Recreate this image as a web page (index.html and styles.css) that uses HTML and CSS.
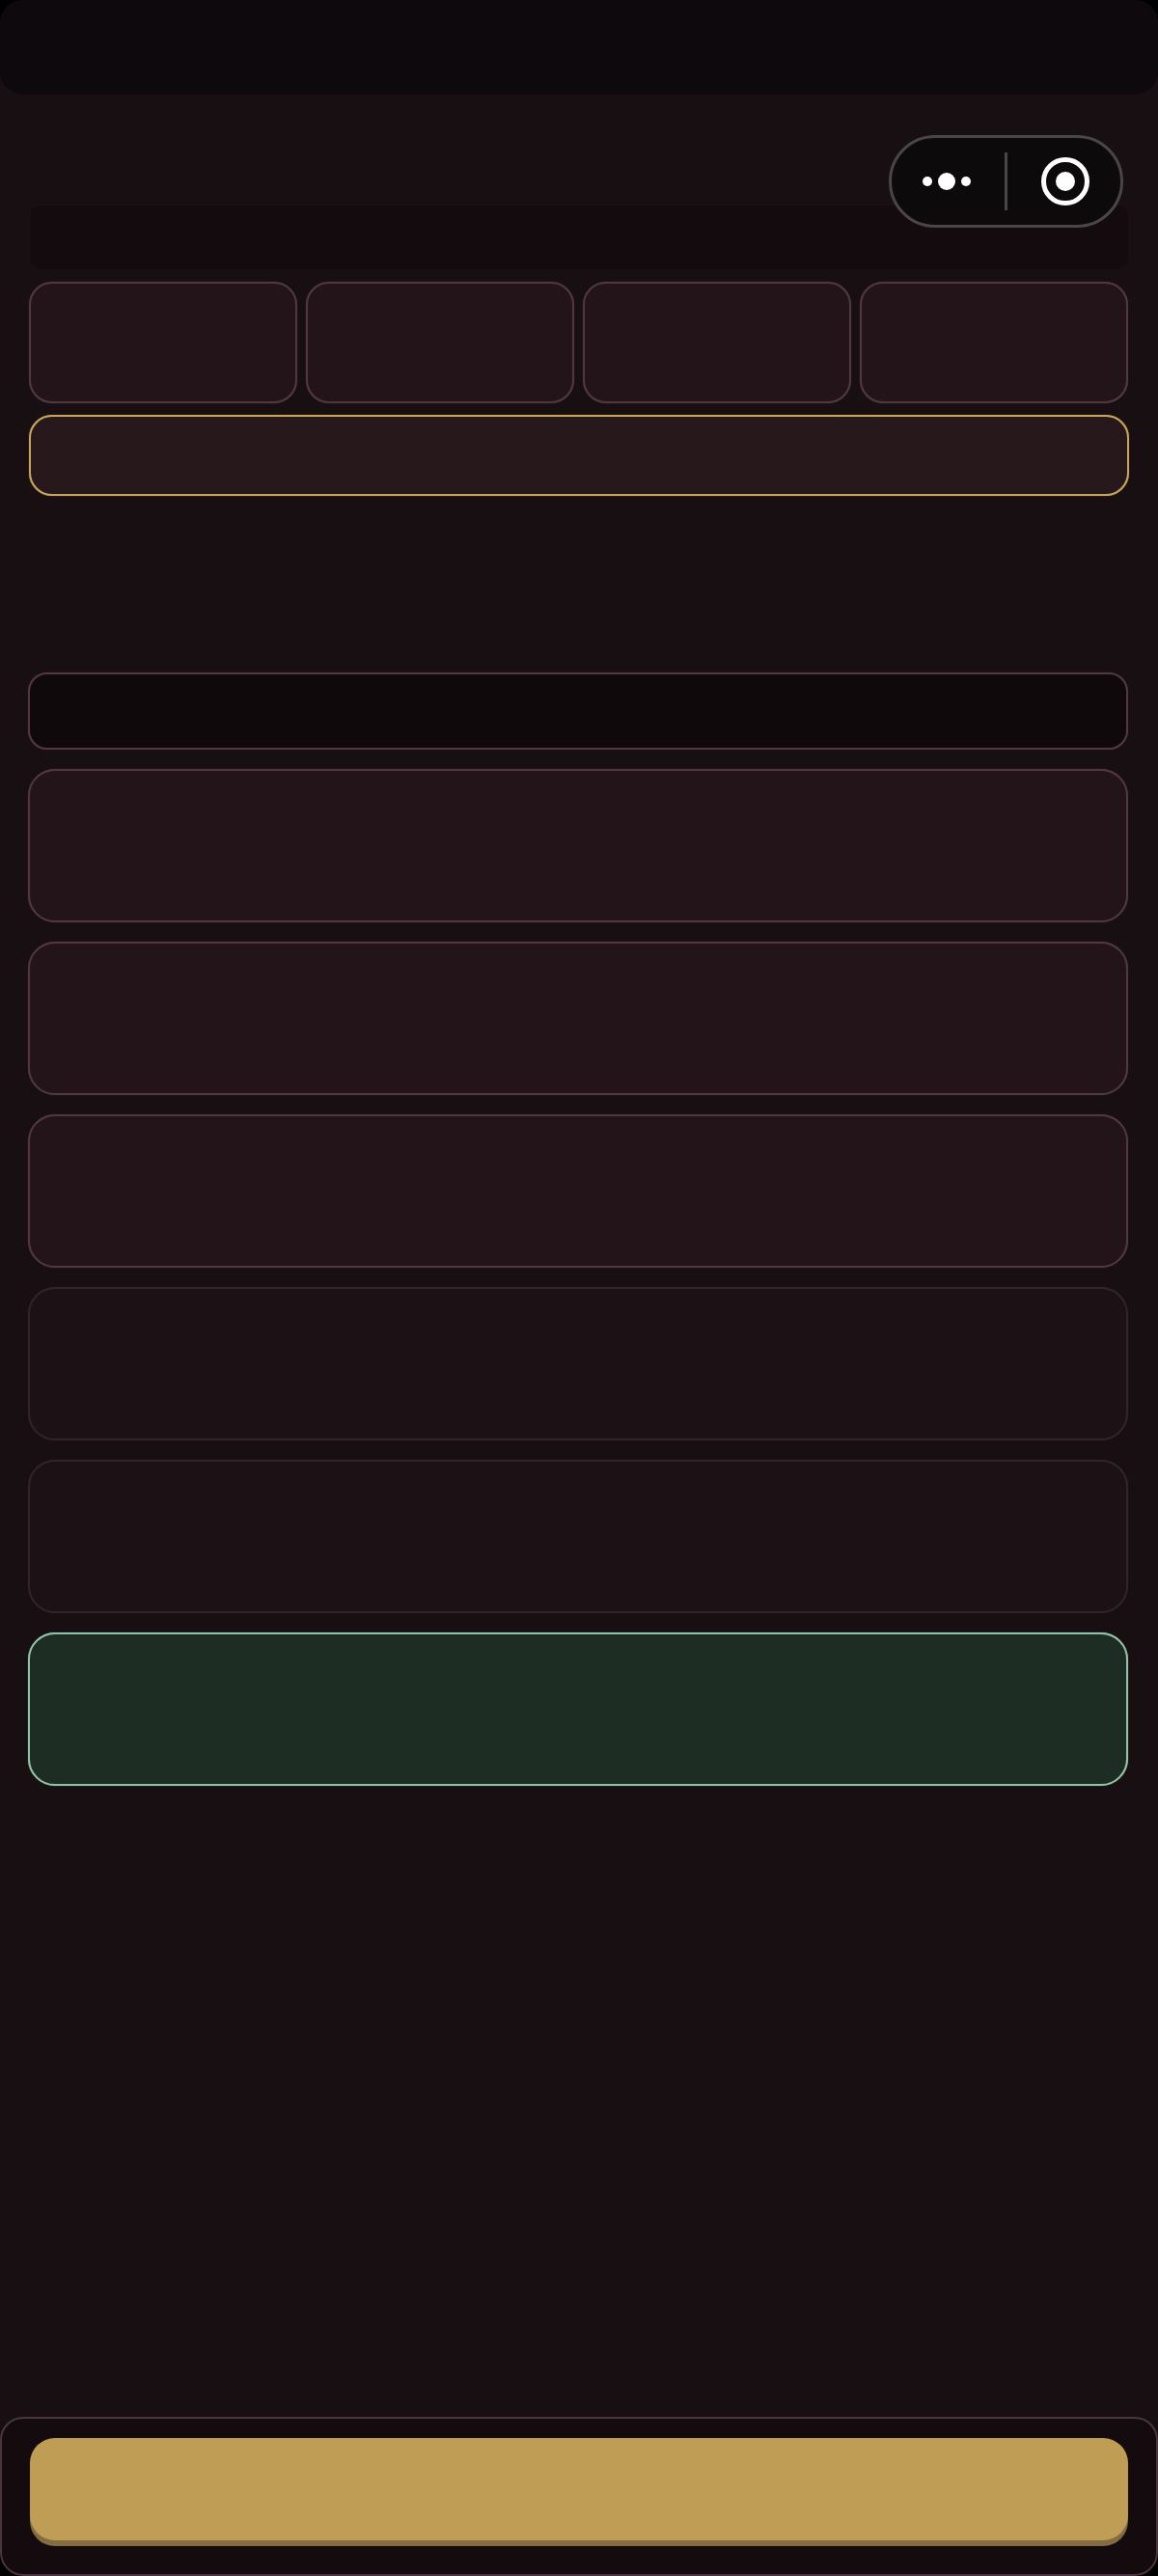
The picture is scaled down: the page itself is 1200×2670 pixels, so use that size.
FILE: index.html
```html
<!DOCTYPE html>
<html lang="en">
<head>
<meta charset="utf-8">
<title>Screen</title>
<link rel="stylesheet" href="styles.css">
</head>
<body>
<div class="screen">
  <header class="status-bar"></header>
  <div class="capsule">
    <div class="capsule-menu">
      <svg width="50" height="18" viewBox="0 0 50 18" aria-hidden="true">
        <circle cx="5" cy="9" r="5" fill="#fff"/>
        <circle cx="25" cy="9" r="9" fill="#fff"/>
        <circle cx="45" cy="9" r="5" fill="#fff"/>
      </svg>
    </div>
    <span class="capsule-divider"></span>
    <div class="capsule-close">
      <svg width="50" height="50" viewBox="0 0 50 50" aria-hidden="true">
        <circle cx="25" cy="25" r="22.5" fill="none" stroke="#fff" stroke-width="5"/>
        <circle cx="25" cy="25" r="10" fill="#fff"/>
      </svg>
    </div>
  </div>
  <main class="content">
    <div class="band"></div>
    <div class="stat-row">
      <div class="stat"></div>
      <div class="stat"></div>
      <div class="stat"></div>
      <div class="stat"></div>
    </div>
    <div class="highlight"></div>
    <div class="search"></div>
    <div class="list">
      <div class="item"></div>
      <div class="item"></div>
      <div class="item"></div>
      <div class="item item-muted"></div>
      <div class="item item-muted"></div>
      <div class="item item-success"></div>
    </div>
  </main>
  <footer class="action-bar">
    <div class="action-button"></div>
  </footer>
</div>
</body>
</html>
```
FILE: styles.css
```css
html, body {
  margin: 0;
  padding: 0;
  background: #000;
}

.screen {
  position: relative;
  width: 1200px;
  height: 2670px;
  display: flex;
  flex-direction: column;
  background: #180f13;
  border-radius: 24px;
  overflow: hidden;
}

.status-bar {
  flex: none;
  height: 98px;
  background: #0e090c;
  border-radius: 24px;
}

.capsule {
  position: absolute;
  top: 140px;
  left: 921px;
  width: 243px;
  height: 96px;
  box-sizing: border-box;
  display: flex;
  align-items: center;
  background: #0d0a0c;
  border: 3px solid #4a4648;
  border-radius: 48px;
  z-index: 2;
}

.capsule-menu {
  flex: none;
  width: 117px;
  box-sizing: border-box;
  padding-right: 3px;
  display: flex;
  justify-content: center;
}

.capsule-divider {
  flex: none;
  width: 3px;
  height: 60px;
  background: #4a4648;
}

.capsule-close {
  flex: 1;
  box-sizing: border-box;
  padding-left: 3px;
  display: flex;
  justify-content: center;
}

.content {
  flex: 1;
  display: flex;
  flex-direction: column;
  padding: 115px 31px 0 29px;
}

.band {
  height: 66px;
  margin: 0 0 13px 2px;
  background: #130b0e;
  border-radius: 12px;
}

.stat-row {
  display: grid;
  grid-template-columns: repeat(4, 1fr);
  gap: 9px;
  margin: 0 0 12px 1px;
}

.stat {
  height: 126px;
  box-sizing: border-box;
  background: #23141a;
  border: 2px solid #513840;
  box-shadow: 0 0 1px #4a3339;
  border-radius: 24px;
}

.highlight {
  height: 84px;
  box-sizing: border-box;
  background: #27181b;
  border: 2px solid #c9a55b;
  box-shadow: 0 0 1px #a8894c;
  border-radius: 24px;
  margin: 0 -1px 183px 1px;
}

.search {
  height: 80px;
  box-sizing: border-box;
  background: #0f090c;
  border: 2px solid #513840;
  box-shadow: 0 0 1px #4a3339;
  border-radius: 20px;
  margin-bottom: 20px;
}

.list {
  display: flex;
  flex-direction: column;
  gap: 20px;
}

.item {
  height: 159px;
  box-sizing: border-box;
  background: #23141a;
  border: 2px solid #513840;
  box-shadow: 0 0 1px #4a3339;
  border-radius: 28px;
}

.item-muted {
  background: #1c1216;
  border-color: #33242a;
  box-shadow: 0 0 1px #2a1d22;
}

.item-success {
  background: #1e2d24;
  border-color: #94c2a5;
  box-shadow: 0 0 1px #7aa58a;
}

.action-bar {
  flex: none;
  height: 165px;
  box-sizing: border-box;
  padding: 20px 29px 0;
  background: #130b0e;
  border: 2px solid #4a3540;
  border-radius: 24px;
}

.action-button {
  height: 106px;
  background: #c09d54;
  border-radius: 26px;
  box-shadow: 0 6px 0 #826c40;
}
```
